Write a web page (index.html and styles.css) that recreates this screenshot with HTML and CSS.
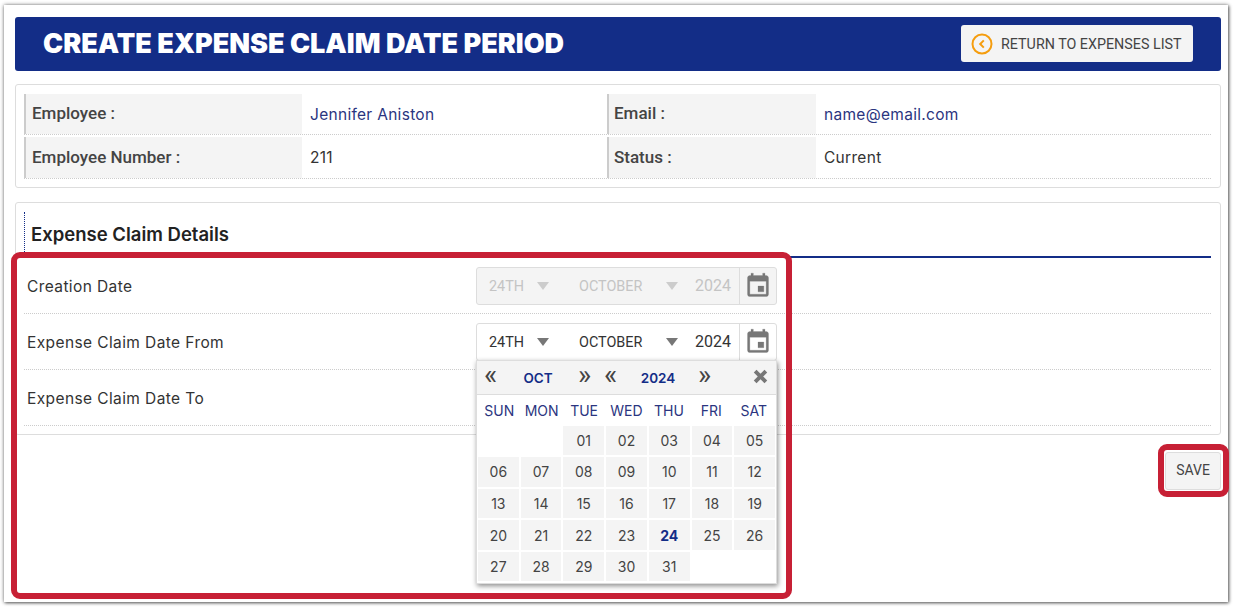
FILE: index.html
```html
<!DOCTYPE html>
<html lang="en">
<head>
    <meta charset="UTF-8">
    <meta name="viewport" content="width=device-width, initial-scale=1.0">
    <title>Create Expense Claim Date Period</title>
    <link rel="stylesheet" href="styles.css">
</head>
<body>
    <div class="frame">
        <div class="page-header">
            <h1>CREATE EXPENSE CLAIM DATE PERIOD</h1>
            <a class="return-btn" href="#">
                <svg class="return-icon" viewBox="0 0 22 22" width="22" height="22">
                    <circle cx="11" cy="11" r="9.5" fill="none" stroke="#f59d0e" stroke-width="2"/>
                    <path d="M12.8 7.4 9.2 11l3.6 3.6" fill="none" stroke="#f59d0e" stroke-width="2"/>
                </svg>
                RETURN TO EXPENSES LIST
            </a>
        </div>

        <div class="panel info-panel">
            <div class="info-row">
                <div class="info-label">Employee :</div>
                <div class="info-value val-1 navy-text">Jennifer Aniston</div>
                <div class="info-label label-2">Email :</div>
                <div class="info-value navy-text">name@email.com</div>
            </div>
            <div class="info-row row-tall">
                <div class="info-label">Employee Number :</div>
                <div class="info-value val-1">211</div>
                <div class="info-label label-2">Status :</div>
                <div class="info-value">Current</div>
            </div>
        </div>

        <div class="panel details-panel">
            <h2>Expense Claim Details</h2>

            <div class="form-row">
                <label>Creation Date</label>
                <div class="date-field disabled">
                    <span class="seg seg-day">24TH</span><span class="caret"></span>
                    <span class="seg seg-month">OCTOBER</span><span class="caret"></span>
                    <span class="seg seg-year">2024</span>
                    <span class="cal-btn">
                        <svg viewBox="0 0 24 24" width="28" height="28"><path d="M17 12h-5v5h5v-5zM16 1v2H8V1H6v2H5c-1.11 0-1.99.9-1.99 2L3 19c0 1.1.89 2 2 2h14c1.1 0 2-.9 2-2V5c0-1.1-.9-2-2-2h-1V1h-2zm3 18H5V8h14v11z"/></svg>
                    </span>
                </div>
            </div>

            <div class="form-row">
                <label>Expense Claim Date From</label>
                <div class="date-field">
                    <span class="seg seg-day">24TH</span><span class="caret"></span>
                    <span class="seg seg-month">OCTOBER</span><span class="caret"></span>
                    <span class="seg seg-year">2024</span>
                    <span class="cal-btn">
                        <svg viewBox="0 0 24 24" width="28" height="28"><path d="M17 12h-5v5h5v-5zM16 1v2H8V1H6v2H5c-1.11 0-1.99.9-1.99 2L3 19c0 1.1.89 2 2 2h14c1.1 0 2-.9 2-2V5c0-1.1-.9-2-2-2h-1V1h-2zm3 18H5V8h14v11z"/></svg>
                    </span>

                    <div class="calendar">
                        <div class="cal-head">
                            <span class="cal-nav">«</span>
                            <span class="cal-title title-month">OCT</span>
                            <span class="cal-nav">»</span>
                            <span class="cal-nav nav-year">«</span>
                            <span class="cal-title title-year">2024</span>
                            <span class="cal-nav">»</span>
                            <svg class="cal-close" viewBox="0 0 14 14" width="15" height="15"><path d="M2 2l10 10M12 2 2 12"/></svg>
                        </div>
                        <div class="cal-weekdays">
                            <span>SUN</span><span>MON</span><span>TUE</span><span>WED</span><span>THU</span><span>FRI</span><span>SAT</span>
                        </div>
                        <div class="cal-days" id="calDays"></div>
                    </div>
                </div>
            </div>

            <div class="form-row">
                <label>Expense Claim Date To</label>
            </div>
        </div>

        <div class="page-footer">
            <button class="save-btn" type="button">SAVE</button>
        </div>

        <div class="mark mark-form"></div>
        <div class="mark mark-save"></div>
    </div>

    <script>
        // October 2024 starts on a Tuesday
        var days = document.getElementById('calDays');
        for (var b = 0; b < 2; b++) {
            days.appendChild(document.createElement('span')).className = 'blank';
        }
        for (var d = 1; d <= 31; d++) {
            var cell = document.createElement('span');
            cell.className = d === 24 ? 'day today' : 'day';
            cell.textContent = d < 10 ? '0' + d : d;
            days.appendChild(cell);
        }
    </script>
</body>
</html>
```

FILE: styles.css
```css
* {
    box-sizing: border-box;
}
html, body {
    height: 100%;
}
body {
    margin: 0;
    padding: 5px 0 0 4px;
    background-color: #fff;
    overflow: hidden;
    font-family: Inter, Arial, sans-serif;
    color: #333;
}
.frame {
    position: relative;
    width: 1224px;
    height: 597px;
    padding: 12px 7px 0 11px;
    background-color: #fff;
    box-shadow: 0 0 4px rgba(0, 0, 0, 0.45), 1px 1px 3px rgba(0, 0, 0, 0.5);
}
.page-header {
    display: flex;
    justify-content: space-between;
    align-items: center;
    height: 54px;
    padding: 0 28px;
    background-color: #132d87;
    border-radius: 3px;
}
h1 {
    margin: 0 0 1px;
    font-size: 27px;
    font-weight: 900;
    color: #fff;
}
.return-btn {
    display: flex;
    align-items: center;
    width: 232px;
    height: 37px;
    margin-bottom: 2px;
    padding: 1px 0 0 10px;
    background-color: #f4f4f4;
    border-radius: 3px;
    font-family: Roboto, Arial, sans-serif;
    font-size: 14.3px;
    color: #444;
    text-decoration: none;
}
.return-icon {
    margin-right: 8px;
}
.panel {
    border: 1px solid #ddd;
    border-radius: 3px;
    background-color: #fff;
}
.info-panel {
    height: 104px;
    margin-top: 13px;
    padding: 9px 9px 9px 8px;
}
.info-row {
    display: flex;
    height: 41px;
    margin-bottom: 2px;
    border-bottom: 1px dotted #ccc;
    font-size: 15.5px;
}
.row-tall {
    height: 42px;
}
.info-label {
    display: flex;
    align-items: center;
    width: 278px;
    padding: 0 0 2px 6px;
    background-color: #f4f4f4;
    border-left: 2px solid #ccc;
    font-family: Roboto, Arial, sans-serif;
    font-size: 17px;
    font-weight: 500;
    color: #444;
}
.label-2 {
    width: 209px;
    padding-left: 5px;
}
.info-value {
    display: flex;
    align-items: center;
    flex: 1;
    padding-left: 8px;
    letter-spacing: 0.3px;
}
.val-1 {
    flex: none;
    width: 305px;
}
.navy-text {
    color: #2b3580;
}
.details-panel {
    height: 233px;
    margin-top: 14px;
    padding: 9px 9px 9px 8px;
}
h2 {
    display: flex;
    align-items: center;
    height: 46px;
    margin: 0;
    padding-left: 6px;
    border-left: 1px dotted #132d87;
    border-bottom: 2px solid #132d87;
    font-size: 18.5px;
    font-weight: 600;
    color: #222;
}
.form-row {
    display: flex;
    align-items: center;
    height: 56px;
    padding-left: 3px;
    border-bottom: 1px dotted #ccc;
    font-size: 15.5px;
    letter-spacing: 0.4px;
}
.form-row label {
    width: 449px;
    padding-top: 1px;
}
.date-field {
    position: relative;
    display: flex;
    align-items: center;
    width: 301px;
    height: 38px;
    border: 1px solid #ddd;
    border-radius: 3px;
    font-family: Roboto, Arial, sans-serif;
    font-size: 14.4px;
    letter-spacing: 0;
    color: #333;
}
.seg-day {
    width: 60px;
    padding: 1px 0 0 12px;
}
.seg-month {
    width: 117px;
    padding: 1px 0 0 30px;
}
.seg-year {
    width: 61px;
    padding-left: 17px;
    font-size: 16px;
}
.caret {
    width: 0;
    height: 0;
    border-left: 6px solid transparent;
    border-right: 6px solid transparent;
    border-top: 8px solid #777;
}
.cal-btn {
    display: flex;
    align-items: center;
    justify-content: center;
    height: 100%;
    flex: 1;
    border-left: 1px solid #ddd;
    fill: #777;
    stroke: #777;
    stroke-width: 0.2;
}
.disabled {
    background-color: #f4f4f4;
    color: #c4c4c4;
}
.disabled .caret {
    border-top-color: #ccc;
}
.calendar {
    position: absolute;
    top: 36px;
    left: -1px;
    z-index: 2;
    width: 301px;
    height: 224px;
    font-family: Inter, Arial, sans-serif;
    background-color: #fff;
    border: 1px solid #ddd;
    box-shadow: 1px 2px 5px rgba(0, 0, 0, 0.45);
}
.cal-head {
    position: relative;
    display: flex;
    align-items: center;
    height: 34px;
    padding-left: 7px;
    background-color: #f4f4f4;
    border-bottom: 1px solid #ddd;
    color: #132d87;
}
.cal-nav {
    width: 14px;
    font-family: Roboto, Arial, sans-serif;
    font-size: 28px;
    line-height: 26px;
    margin-top: -4px;
    color: #444;
}
.nav-year {
    margin-left: 12px;
}
.cal-title {
    padding-top: 1px;
    text-align: center;
    font-size: 13.5px;
    font-weight: 600;
}
.title-month {
    width: 80px;
}
.title-year {
    width: 80px;
}
.cal-close {
    position: absolute;
    top: 8px;
    right: 8px;
    fill: none;
    stroke: #777;
    stroke-width: 3.6;
}
.cal-weekdays {
    display: grid;
    grid-template-columns: repeat(7, 1fr);
    height: 31px;
    padding: 0 1px;
    align-items: center;
    text-align: center;
    font-size: 14px;
    color: #2b3580;
}
.cal-days {
    display: grid;
    grid-template-columns: repeat(7, 1fr);
    grid-auto-rows: 29.6px;
    gap: 2px;
    padding: 0 1px;
}
.day {
    display: flex;
    align-items: center;
    justify-content: center;
    background-color: #f4f4f4;
    font-size: 14px;
    color: #444;
}
.today {
    font-weight: 700;
    color: #132d87;
}
.page-footer {
    display: flex;
    justify-content: flex-end;
    margin-top: 17px;
}
.save-btn {
    width: 56px;
    height: 38px;
    padding: 0 0 2px;
    background-color: #f4f4f4;
    border: 1px solid #ddd;
    border-radius: 3px;
    font-family: Roboto, Arial, sans-serif;
    font-size: 14px;
    color: #444;
}
.mark {
    position: absolute;
    z-index: 3;
    border: 6px solid #c72035;
    border-radius: 9px;
    pointer-events: none;
}
.mark-form {
    top: 247px;
    left: 7px;
    width: 781px;
    height: 347px;
}
.mark-save {
    top: 439px;
    left: 1154px;
    width: 71px;
    height: 53px;
}
```
